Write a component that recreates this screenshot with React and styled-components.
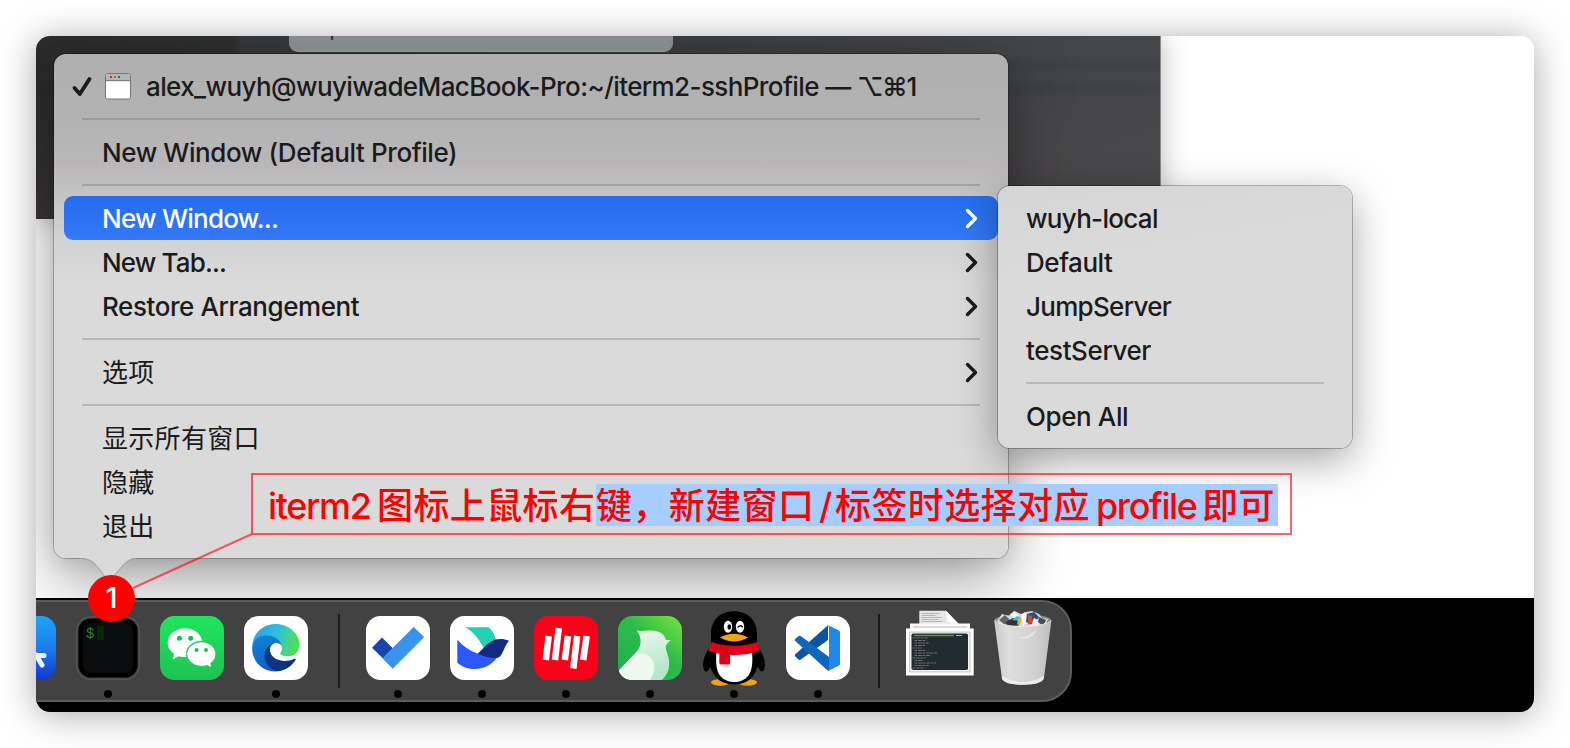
import React from "react";
import styled, { createGlobalStyle, css } from "styled-components";

const GlobalStyle = createGlobalStyle`
  * { box-sizing: border-box; }
  body { margin: 0; background: #fff; }
  svg { display: block; flex: none; overflow: visible; }
`;

const Page = styled.main`
  width: 1570px;
  height: 748px;
  padding: 36px;
  overflow: hidden;
  font-family: Inter, "Noto Sans CJK SC", "DejaVu Sans", sans-serif;
  background: #fff;
`;

const Screen = styled.section`
  position: relative;
  display: flex;
  flex-direction: column;
  width: 1498px;
  height: 676px;
`;

const ScreenShadow = styled.div`
  border-radius: 14px;
  box-shadow: 0 3px 36px rgba(0, 0, 0, 0.34);
`;

const Clip = styled.div`
  display: flex;
  flex-direction: column;
  height: 676px;
  border-radius: 14px;
  overflow: hidden;
  background: #fff;
`;

const Desktop = styled.div`
  position: relative;
  height: 562px;
  overflow: hidden;
  background: #fff;
`;

const TerminalWindow = styled.div`
  display: flex;
  width: 1125px;
  height: 183px;
  padding-left: 253px;
  border-right: 1px solid #8b8b8b;
  background:
    linear-gradient(180deg, transparent 20px, rgba(25, 28, 30, 0.12) 30px, transparent 40px, rgba(25, 28, 30, 0.12) 52px, transparent 64px),
    linear-gradient(180deg, transparent 50px, rgba(90, 76, 76, 0.3) 183px),
    linear-gradient(90deg, #2b2b2c 0, #2e2f30 198px, #36383a 206px, #3c3d3f 640px, #46474a 100%);
  box-shadow: 0 0 26px rgba(0, 0, 0, 0.28);
`;

const Tooltip = styled.div`
  width: 384px;
  height: 16px;
  padding-left: 24px;
  overflow: hidden;
  border-radius: 0 0 9px 9px;
  border-bottom: 1px solid #a4a8a9;
  background: linear-gradient(#8b9092, #929799);
  font-size: 25px;
  line-height: 1px;
  color: #303334;
`;

const TooltipText = styled.span`
  display: block;
  margin-top: -10px;
`;

const menuShell = css`
  position: absolute;
  display: flex;
  flex-direction: column;
  padding: 10px;
  border-radius: 12px;
`;

const MainMenu = styled.nav`
  ${menuShell}
  left: 18px;
  top: 18px;
  width: 954px;
  height: 504px;
  background: linear-gradient(#afafaf 0, #b3b2b3 60px, #b9b7b9 110px, #c3c2c2 136px, #d3d2d2 184px, #dadada 230px);
  box-shadow: 0 0 0 1px rgba(0, 0, 0, 0.25), 0 4px 20px rgba(0, 0, 0, 0.1), 0 24px 64px rgba(0, 0, 0, 0.36);
`;

const SubMenu = styled.nav`
  ${menuShell}
  left: 962px;
  top: 150px;
  width: 354px;
  height: 262px;
  background: linear-gradient(170deg, #d5d5d5, #dadada 30%);
  box-shadow: 0 0 0 1px rgba(0, 0, 0, 0.26), 0 12px 42px rgba(0, 0, 0, 0.36);
`;

const Pointer = styled.svg`
  position: absolute;
  left: 26px;
  top: 503px;
`;

const Item = styled.div`
  display: flex;
  align-items: center;
  height: 44px;
  padding: 0 20px 0 ${(p) => p.$indent ?? 38}px;
  border-radius: 9px;
  color: ${(p) => (p.$active ? "#fff" : "#1b1b1b")};
  background: ${(p) => (p.$active ? "linear-gradient(#256ced, #3379f9)" : "none")};
  font-size: 26px;
  font-weight: ${(p) => (p.$cjk ? 400 : 450)};
  line-height: 44px;
  white-space: nowrap;
`;

const Label = styled.span`
  flex: none;
  padding-top: 2px;
  letter-spacing: ${(p) => p.$track ?? 0}px;
`;

const Shortcut = styled.span`
  letter-spacing: -1.4px;
`;

const Chevron = styled.svg`
  margin-left: auto;
`;

const Rule = styled.hr`
  flex: none;
  width: auto;
  height: 2px;
  margin: 10px 18px;
  border: 0;
  background: rgba(0, 0, 0, 0.15);
`;

const DockStrip = styled.footer`
  height: 114px;
  padding-top: 2px;
  background: #000;
`;

const Dock = styled.div`
  display: flex;
  gap: 20px;
  width: 1102px;
  height: 102px;
  margin-left: -66px;
  padding: 14px 17px 0 20px;
  border: 2px solid #5c5c5c;
  border-radius: 30px;
  background: #424242;
`;

const App64 = styled.div`
  display: flex;
  flex-direction: column;
  align-items: center;
  width: ${(p) => p.$w ?? 64}px;
  flex: none;
`;

const IconBox = styled.div`
  display: flex;
  align-items: center;
  justify-content: center;
  height: 64px;
  transform: translateY(${(p) => p.$shift ?? 0}px);
`;

const Dot = styled.i`
  width: 8px;
  height: 8px;
  margin-top: 10px;
  border-radius: 50%;
  background: #000;
`;

const DockRule = styled.div`
  flex: none;
  width: 2px;
  height: 74px;
  margin: -2px 6px 0 ${(p) => p.$ml}px;
  background: #191919;
`;

const Callout = styled.div`
  position: absolute;
  left: 215px;
  top: 437px;
  display: flex;
  align-items: flex-start;
  width: 1041px;
  height: 62px;
  padding: 9px 0 0 15px;
  border: 2px solid rgba(255, 0, 20, 0.62);
  color: #f00;
  font-size: 36px;
  font-weight: 500;
  line-height: 44px;
  white-space: nowrap;
`;

const Selected = styled.span`
  display: flex;
  width: 682px;
  height: 42px;
  background: #a5cdff;
`;

const Run = styled.span`
  flex: none;
  width: ${(p) => p.$w}px;
  letter-spacing: ${(p) => p.$track ?? 0.4}px;
  padding-left: ${(p) => p.$pl ?? 0}px;
`;

const Leader = styled.svg`
  position: absolute;
  left: 0;
  top: 437px;
`;

const Badge = styled.div`
  position: absolute;
  left: 52px;
  top: 539px;
  display: flex;
  align-items: center;
  justify-content: center;
  width: 47px;
  height: 47px;
  border-radius: 50%;
  background: #f00;
  color: #fff;
  font-size: 29px;
  font-weight: 500;
  padding-bottom: 3px;
`;

const Arrow = () => (
  <Chevron width="12" height="20" viewBox="0 0 12 20" fill="none" stroke="currentColor" strokeWidth="3.4" strokeLinecap="round" strokeLinejoin="round">
    <path d="M1.500 2.500 L9.500 10.500 L1.500 18.500" />
  </Chevron>
);

const Tile = ({ children, fill = "#fff" }) => (
  <svg width="64" height="64" viewBox="0 0 64 64">
    <rect width="64" height="64" rx="14.5" fill={fill} />
    {children}
  </svg>
);

const Launchpad = () => (
  <Tile fill="url(#lp)">
    <defs>
      <linearGradient id="lp" x1="0" y1="0" x2="0" y2="1">
        <stop offset="0" stopColor="#1ea4f4" /><stop offset=".5" stopColor="#1d7cec" /><stop offset="1" stopColor="#1238cf" />
      </linearGradient>
    </defs>
    <path d="M38 39.5 H52 M44 39 L50 49" stroke="#e9f4ff" strokeWidth="5" strokeLinecap="round" />
  </Tile>
);

const ITerm = () => (
  <svg width="64" height="64" viewBox="0 0 64 64">
    <rect x=".8" y=".8" width="62.4" height="62.4" rx="14" fill="#3c4144" stroke="#525a5e" strokeWidth="1.2" />
    <rect x="2.4" y="2.4" width="59.2" height="59.2" rx="12.5" fill="#000" />
    <rect x="7" y="7" width="50" height="50" rx="8" fill="#0a0c0e" />
    <text x="10" y="22" fontFamily="Liberation Mono" fontSize="14" fill="#1d8a1f">$</text>
    <rect x="21" y="10" width="7" height="14" fill="#07290b" />
  </svg>
);

const WeChat = () => (
  <Tile fill="url(#wc)">
    <defs>
      <linearGradient id="wc" x1="0" y1="0" x2="0" y2="1"><stop offset="0" stopColor="#1fe55d" /><stop offset="1" stopColor="#1ec253" /></linearGradient>
    </defs>
    <path d="M25 12.2c-9.6 0-17.3 6.4-17.3 14.5 0 4.6 2.5 8.4 6.3 11l-1.2 5.8 6-3.3c2 .6 4 .9 6.2.9 9.600 0 17.300-6.400 17.300-14.400S34.600 12.200 25 12.200z" fill="#fff" />
    <circle cx="19.400" cy="22.200" r="2.500" fill="#1bbb50" /><circle cx="30.700" cy="22.200" r="2.500" fill="#1bbb50" />
    <path d="M41.300 25.500c8.100 0 14.700 5.500 14.700 12.500 0 4-2 7.200-5 9.500l.9 4.600-5-2.500c-1.700.6-3.600.9-5.600.9-8.100 0-14.700-5.600-14.700-12.500s6.600-12.500 14.700-12.500z" fill="#fff" stroke="#1fcd57" strokeWidth="1.300" />
    <circle cx="36.500" cy="34" r="2" fill="#1bbb50" /><circle cx="46" cy="34" r="2" fill="#1bbb50" />
  </Tile>
);

const Edge = () => (
  <Tile>
    <defs>
      <linearGradient id="e1" x1="0" y1=".4" x2="1" y2=".6"><stop offset="0" stopColor="#28a4e8" /><stop offset=".5" stopColor="#2fc0d8" /><stop offset=".8" stopColor="#48d878" /><stop offset="1" stopColor="#50df4e" /></linearGradient>
      <linearGradient id="e2" x1="0" y1="0" x2=".4" y2="1"><stop offset="0" stopColor="#1483d8" /><stop offset="1" stopColor="#0c5dc7" /></linearGradient>
      <linearGradient id="e3" x1="0" y1="0" x2="1" y2="1"><stop offset="0" stopColor="#103d8e" /><stop offset="1" stopColor="#0a2f6e" /></linearGradient>
    </defs>
    <path d="M8.200 30C9 17 19 8 31.700 8c13.600 0 24 10.200 24 21 0 7-5.500 11.200-12 11.200-4.200 0-7.500-1-7.500-2.700 0-1 1.700-1.800 1.700-5 0-5.500-5-11-14-11C16 21.500 10 25 8.200 30z" fill="url(#e1)" />
    <path d="M8.200 31C9 24 15 19.600 22.500 19.600c8 0 14 4.700 15.400 10-2-2.200-4.200-3-6.200-2.600-4 .8-6.500 4.500-5.700 8.800 1 6.400 7 10.200 13 10.200 5 0 8-1.400 12-3.200C47 50.600 40 55.500 31.700 55.500 18 55.500 7.300 44.600 8.200 31z" fill="url(#e2)" />
    <path d="M27.500 27.800c-5 3.200-7.800 8.700-6.700 14.700 1.300 7 7 12.200 13.700 12.600 7-.8 13.400-5 17.200-11.300.4-.8-.4-1.400-1.200-1-3 1.600-6 2.200-9.500 2.200-7.400 0-13.600-4-15-9.300-.8-3-.2-5.800 1.500-7.900z" fill="url(#e3)" />
  </Tile>
);

const Todo = () => (
  <Tile>
    <path d="M6 31.700 L16 21.500 L31 36.500 L17 42.600 Z" fill="#1545ad" strokeLinejoin="round" />
    <path d="M16.300 42.300 L47.700 10.900 L58.200 21 L26.700 52.700 Z" fill="#3793ec" />
  </Tile>
);

const Lark = () => (
  <Tile>
    <path d="M15.300 11.300H38.500c3.500 2.500 6.300 7.500 7.500 13L34.300 33.500C30 24 24 16.500 15.300 11.300z" fill="#1ed3ae" />
    <path d="M7.300 23.700C13 30 20 35 27.700 37.600c7 2.500 14 3.600 19.500 3.900C41 49.500 33 53 25 53c-7 0-12.500-2-17.700-6.300z" fill="#2a58ff" />
    <path d="M27.700 37.600C33 33 36 28.500 41 25.500c5.500-3.200 12-3.200 18-.7-3.600 4-4.600 8.500-7 12.700-1 2-3 4.300-5 4.500-6 .6-13-1-19.300-4.400z" fill="#132a82" />
  </Tile>
);

const Yellow = () => (
  <Tile fill="#fb0019">
    <path d="M14.700 20 L11.800 44 M24.800 12 L21 44 M34 20 L30.800 44 M43.200 20 L39.300 52.500 M52.700 20 L49.200 44" fill="none" stroke="#fff" strokeWidth="6.500" strokeLinejoin="round" />
  </Tile>
);

const Bird = () => (
  <Tile fill="url(#bd)">
    <defs>
      <linearGradient id="bd" x1=".2" y1=".9" x2="1" y2="0"><stop offset="0" stopColor="#22b052" /><stop offset=".5" stopColor="#2ebd47" /><stop offset="1" stopColor="#7be33f" /></linearGradient>
      <linearGradient id="bw" x1="0" y1="0" x2=".3" y2="1"><stop offset="0" stopColor="#ecfaf0" /><stop offset="1" stopColor="#b5e6c8" /></linearGradient>
    </defs>
    <path d="M18.700 14.300C22 15.500 27 14.500 33 14.500c8.500 0 13.500 3.500 15 9.500h5c-2 2-5 4-5.300 7.300C48 36 51.500 41 51.200 48c-.3 7-3 12-7.500 16H14.500C7.500 64 2.500 60 .9 54.500L18 36.500c5-5.500 7-13 .700-22.200z" fill="url(#bw)" />
    <path d="M.9 54.500 L16 38.600c9-3.600 20 .9 20.300 12 .1 5-1.300 9.400-4.300 13.400H14.500C7.500 64 2.500 60 .9 54.500z" fill="#ecf8f0" />
  </Tile>
);

const Penguin = () => (
  <svg width="62" height="75" viewBox="0 0 62 75">
    <ellipse cx="17.500" cy="71.300" rx="9.500" ry="3.400" fill="#f6a11a" /><ellipse cx="44.500" cy="71.300" rx="9.500" ry="3.400" fill="#f6a11a" />
    <path d="M6 37 C2 43 -1 51 .5 57 Q1.500 62 4.500 60 L14 47 L48 47 L57.500 60 Q60.500 62 61.500 57 C63 51 60 43 56 37 Z" fill="#000" />
    <path d="M31 .3C17 .3 8 9.500 8 23v12C6 45 6 55 10 62c4.500 8 12 11.500 21 11.500S47.500 70 52 62c4-7 4-17 2-27V23C54 9.500 45 .3 31 .3z" fill="#000" />
    <path d="M13.500 40 H49 C50 52 49 60 45 65c-3.500 4-8 6-13.700 6s-10.500-2-14-6c-4-5-4.800-13-3.800-25z" fill="#fff" />
    <path d="M9 31c13 5 31 5 45 0l3 8.500c-16 6-36 6-52 0z" fill="#e1001c" />
    <path d="M16.300 40h10.800v13.500H18q-1.700 0-1.700-2z" fill="#e1001c" />
    <ellipse cx="25" cy="15.700" rx="4.200" ry="6" fill="#fff" /><ellipse cx="37" cy="15.700" rx="4.200" ry="6" fill="#fff" />
    <ellipse cx="26.300" cy="16" rx="1.900" ry="2.700" fill="#000" />
    <path d="M34.500 16.500q2.700-3.300 5.300-.3" stroke="#000" strokeWidth="1.300" fill="none" />
    <path d="M17 26.500q14-7.500 28 0q-14 8-28 0z" fill="#f6a11a" />
  </svg>
);

const Code = () => (
  <Tile>
    <path d="M9 38.500 L42 9.300 V24 L14.800 43.500 Q13.500 44.500 12.300 43.300 L9.300 40.500 Q8.500 39.500 9 38.500z" fill="#0b559f" />
    <path d="M9 24.800 Q8.500 23.500 9.300 22.700 L12.300 20.300 Q13.500 19.300 15 20.300 L43 41 V54.800 Q41 54.300 40 53z" fill="#0d66bf" />
    <path d="M42 9.200 L53 14.500 Q54 15 54 16.500 V47.500 Q54 49 53 49.500 L42 54.900 Q43 53 43 51 V13 Q43 10.500 42 9.200z" fill="#1d88e8" />
  </Tile>
);

const lines = [34, 26, 20, 24, 18, 16, 20, 38, 27, 22, 14, 36, 24, 20];
const Stack = () => (
  <svg width="68" height="66" viewBox="0 0 68 66">
    <path d="M13.300.7H40L53 14.300H13.300z" fill="#e6e6e6" />
    <path d="M40 .7 L41 12 Q47 13 53 14.300z" fill="#fff" />
    <path d="M15.500 3.500h18M15.500 5.500h14M15.500 7.500h20M15.500 9.500h17M15.500 11.500h21" stroke="#a9a9a9" strokeWidth=".8" />
    <rect x="4" y="13.500" width="60" height="7" fill="#fafafa" /><path d="M7 17h54" stroke="#b9b9b9" strokeWidth="1" />
    <rect x="0" y="18.500" width="67.700" height="47" fill="#fff" />
    <rect x="3" y="21.500" width="61.700" height="41" fill="#cfcfcf" />
    <rect x="4.200" y="22.700" width="59.300" height="38.600" fill="#f2f2f2" />
    <rect x="5.500" y="23.500" width="56.500" height="36.500" rx="1.800" fill="#222b30" />
    <path d="M8 25.500h40" stroke="#4f9a35" strokeWidth="1.300" /><path d="M50 25.500h6" stroke="#8db4c8" strokeWidth="1" />
    {lines.slice(1).map((w, i) => (
      <path key={i} d={`M${i % 4 ? 8.500 : 6.500} ${28 + i * 2.500}h${w * 0.6}`} stroke="#a3adb0" strokeWidth=".9" strokeDasharray="2.500 .8 4 .7" opacity=".6" />
    ))}
  </svg>
);

const Trash = () => (
  <svg width="58" height="75" viewBox="0 0 58 75">
    <defs>
      <linearGradient id="tr" x1="0" y1="0" x2="1" y2="0"><stop offset="0" stopColor="#c9cacb" /><stop offset=".25" stopColor="#dedede" /><stop offset=".7" stopColor="#d2d1d1" /><stop offset="1" stopColor="#bdbec0" /></linearGradient>
    </defs>
    <ellipse cx="28.800" cy="10.500" rx="28.500" ry="6.500" fill="#8d8f90" />
    <path d="M3 11 L8 4 L15 6 L20 .7 L27 4 L32 2 L38 1 L45 4 L48 8 L54 9 L50 17 H8z" fill="#d9d9d9" />
    <path d="M5 10l6-5 6 6-6 4z" fill="#626466" /><path d="M16 4l5-2 4 4-5 3z" fill="#fff" />
    <path d="M12 12l7-4 8 3-3 5H13z" fill="#333" /><path d="M18 10l5-4 5 2-2 3z" fill="#2fc0ee" /><path d="M24 9l4-1-1 5-4 2z" fill="#e2b52e" />
    <path d="M27 6l4-4 3 9-5 5z" fill="#f7f7f7" /><path d="M33 4l7-2 5 5-6 8-7-3z" fill="#284d8c" /><path d="M34 5l4 1 1 6-5 3z" fill="#d8481f" />
    <path d="M40 8l6 3-2 5h-7z" fill="#ededed" /><path d="M45 7l7 3-3 6-5-4z" fill="#4b4c4e" />
    <path d="M.2 10.500 Q5 16 28.800 16.500 Q52 16 57.400 10.500 L50 67.500 Q49 74.600 29 74.700 Q9 74.600 7.800 67.500z" fill="url(#tr)" />
    <path d="M8.500 66 Q28 78 49.500 66 L50 68 Q48 74.600 29 74.700 Q9 74.600 7.800 68z" fill="#f0f2f4" opacity=".8" />
    <path d="M22 28q11 0 21-9-2 9-13 10z" fill="#f1f1f1" opacity=".5" />
    <path d="M.5 10.500 Q5 16 28.800 16.500 Q52 16 57.200 10.500" fill="none" stroke="#eee" strokeWidth=".8" />
  </svg>
);

const appsA = [[Launchpad, false], [ITerm, true], [WeChat, false], [Edge, true]];
const appsB = [Todo, Lark, Yellow, Bird, Penguin, Code];

const DockApp = ({ icon: Icon, running, w, shift }) => (
  <App64 $w={w}>
    <IconBox $shift={shift}><Icon /></IconBox>
    {running && <Dot />}
  </App64>
);

const Check = styled.svg`
  margin-right: 13px;
`;
const WindowGlyph = styled.svg`
  margin-right: 15px;
`;

export default function App() {
  return (
    <Page>
      <GlobalStyle />
      <Screen>
        <ScreenShadow>
          <Clip>
            <Desktop>
              <TerminalWindow>
                <Tooltip><TooltipText>Split</TooltipText></Tooltip>
              </TerminalWindow>
              <MainMenu>
                <Pointer width="56" height="30" viewBox="0 0 56 30">
                  <path d="M0 0 V1 C11 1.500 14 5 18 10 L25 20 Q29 25 33 20 L42 9 C46 4 50 1.500 56 1 V0z" fill="#dadada" />
                  <path d="M0 1.500 C11 2 14 5.500 18 10.500 L25 20 M33 20 L42 9.500 C46 4.500 50 2 56 1.500" fill="none" stroke="#a0a0a0" />
                </Pointer>
                <Item $indent={8}>
                  <Check width="19" height="20" viewBox="0 0 19 20" fill="none" stroke="#1b1b1b" strokeWidth="3.800" strokeLinecap="round" strokeLinejoin="round">
                    <path d="M2.500 12 L7.800 18 L17.500 3" />
                  </Check>
                  <WindowGlyph width="27" height="27" viewBox="0 0 27 27">
                    <g transform="translate(1 0)">
                      <rect x=".5" y=".5" width="25" height="25.500" rx="2" fill="#fff" stroke="#777" />
                      <path d="M1 8V2.500Q1 1 2.500 1h21Q25 1 25 2.500V8z" fill="#b6b6b6" />
                      <path d="M1 7.700h24" stroke="#777" />
                      <path d="M5 3h2v2H5z" fill="#e0243a" /><path d="M9 3h2v2H9z" fill="#c46a11" /><path d="M13 3h2v2h-2z" fill="#36801f" />
                    </g>
                  </WindowGlyph>
                  <Label $track={-0.6}>alex_wuyh@wuyiwadeMacBook-Pro:~/iterm2-sshProfile — <Shortcut>⌥⌘1</Shortcut></Label>
                </Item>
                <Rule />
                <Item><Label $track={-0.42}>New Window (Default Profile)</Label></Item>
                <Rule />
                <Item $active><Label $track={-0.76}>New Window...</Label><Arrow /></Item>
                <Item><Label $track={-0.86}>New Tab...</Label><Arrow /></Item>
                <Item><Label $track={-0.42}>Restore Arrangement</Label><Arrow /></Item>
                <Rule />
                <Item $cjk><Label $track={0.3}>选项</Label><Arrow /></Item>
                <Rule />
                <Item $cjk><Label $track={0.3}>显示所有窗口</Label></Item>
                <Item $cjk><Label $track={0.3}>隐藏</Label></Item>
                <Item $cjk><Label $track={0.3}>退出</Label></Item>
              </MainMenu>
              <SubMenu>
                <Item $indent={18}><Label $track={-0.7}>wuyh-local</Label></Item>
                <Item $indent={18}><Label $track={-0.45}>Default</Label></Item>
                <Item $indent={18}><Label $track={-0.7}>JumpServer</Label></Item>
                <Item $indent={18}><Label $track={-0.4}>testServer</Label></Item>
                <Rule />
                <Item $indent={18}><Label $track={-0.4}>Open All</Label></Item>
              </SubMenu>
            </Desktop>
            <DockStrip>
              <Dock>
                {appsA.map(([icon, running], i) => <DockApp key={i} icon={icon} running={running} />)}
                <DockRule $ml={10} />
                {appsB.map((icon, i) => <DockApp key={i} icon={icon} running />)}
                <DockRule $ml={8} />
                <DockApp icon={Stack} w={68} shift={-5} />
                <DockApp icon={Trash} w={58} shift={-1} />
              </Dock>
            </DockStrip>
          </Clip>
        </ScreenShadow>
        <Leader width="220" height="130" viewBox="0 0 220 130">
          <path d="M97 115 L216 61" stroke="#ff0014" strokeOpacity=".62" strokeWidth="2" />
        </Leader>
        <Callout>
          <Run $w={109} $track={-1.35}>iterm2</Run>
          <Run $w={219}>图标上鼠标右</Run>
          <Selected>
            <Run $w={219}>键，新建窗口</Run>
            <Run $w={20} $pl={4}>/</Run>
            <Run $w={259}>标签时选择对应</Run>
            <Run $w={108} $pl={2} $track={-1.4}>profile</Run>
            <Run $w={76}>即可</Run>
          </Selected>
        </Callout>
        <Badge>1</Badge>
      </Screen>
    </Page>
  );
}
